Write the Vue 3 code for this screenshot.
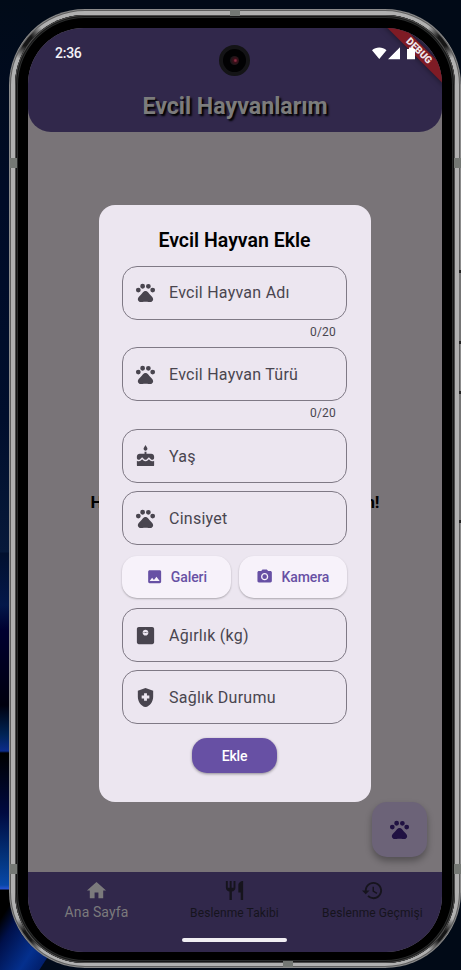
<script setup>
const pets = [
  'M2 9.5a2.5 2.5 0 1 0 5 0a2.5 2.5 0 1 0-5 0zM6.5 5.5a2.5 2.5 0 1 0 5 0a2.5 2.5 0 1 0-5 0zM12.5 5.5a2.5 2.5 0 1 0 5 0a2.5 2.5 0 1 0-5 0zM17 9.5a2.5 2.5 0 1 0 5 0a2.5 2.5 0 1 0-5 0z',
  'M17.34 14.86c-.87-1.02-1.6-1.89-2.48-2.91-.46-.54-1.05-1.08-1.75-1.32-.11-.04-.22-.07-.33-.09-.25-.04-.52-.04-.78-.04s-.53 0-.79.05c-.11.02-.22.05-.33.09-.7.24-1.28.78-1.75 1.32-.87 1.02-1.6 1.89-2.48 2.91-1.31 1.31-2.92 2.76-2.62 4.79.29 1.02 1.02 2.03 2.33 2.32.73.15 3.06-.44 5.54-.44h.18c2.48 0 4.81.58 5.54.44 1.31-.29 2.04-1.31 2.33-2.32.31-2.04-1.3-3.49-2.61-4.8z'
].join('')
const cake = 'M12 6c1.11 0 2-.9 2-2 0-.38-.1-.73-.29-1.03L12 0l-1.71 2.97c-.19.3-.29.65-.29 1.03 0 1.1.9 2 2 2zm4.6 9.99l-1.07-1.07-1.08 1.07c-1.3 1.3-3.58 1.31-4.89 0l-1.07-1.07-1.09 1.07C6.75 16.64 5.88 17 4.96 17c-.73 0-1.4-.23-1.96-.61V21c0 .55.45 1 1 1h16c.55 0 1-.45 1-1v-4.61c-.56.38-1.23.61-1.96.61-.92 0-1.79-.36-2.44-1.01zM18 9h-5V7h-2v2H6c-1.66 0-3 1.34-3 3v1.54c0 1.08.88 1.96 1.96 1.96.52 0 1.02-.2 1.38-.57l2.14-2.13 2.13 2.13c.74.74 2.03.74 2.77 0l2.14-2.13 2.13 2.13c.37.37.86.57 1.38.57 1.08 0 1.96-.88 1.96-1.96V12C21 10.34 19.66 9 18 9z'
const weight = 'M19 3H5c-1.1 0-2 .9-2 2v14c0 1.1.9 2 2 2h14c1.1 0 2-.9 2-2V5c0-1.1-.9-2-2-2zM12 12c-1.66 0-3-1.34-3-3s1.34-3 3-3 3 1.34 3 3-1.34 3-3 3zM10 8.5v1h1v-1zM11.5 8.5v1h1v-1zM13 8.5v1h1v-1z'
const health = 'M10.5 13H8v-3h2.5V7.5h3V10H16v3h-2.5v2.5h-3V13zM12 2L4 5v6.09c0 5.05 3.41 9.76 8 10.91 4.59-1.15 8-5.86 8-10.91V5l-8-3z'
const image = 'M21 19V5c0-1.1-.9-2-2-2H5c-1.1 0-2 .9-2 2v14c0 1.1.9 2 2 2h14c1.1 0 2-.9 2-2zM8.5 13.5l2.5 3.01L14.5 12l4.5 6H5l3.5-4.5z'
const camera = 'M8.8 12a3.2 3.2 0 1 0 6.4 0a3.2 3.2 0 1 0-6.4 0zM9 2L7.17 4H4c-1.1 0-2 .9-2 2v12c0 1.1.9 2 2 2h16c1.1 0 2-.9 2-2V6c0-1.1-.9-2-2-2h-3.17L15 2H9zm3 15c-2.76 0-5-2.24-5-5s2.24-5 5-5 5 2.24 5 5-2.24 5-5 5z'

const topFields = [
  { label: 'Evcil Hayvan Adı', icon: pets, counter: '0/20' },
  { label: 'Evcil Hayvan Türü', icon: pets, counter: '0/20' },
  { label: 'Yaş', icon: cake },
  { label: 'Cinsiyet', icon: pets }
]
const bottomFields = [
  { label: 'Ağırlık (kg)', icon: weight },
  { label: 'Sağlık Durumu', icon: health }
]
const photoButtons = [
  { label: 'Galeri', icon: image },
  { label: 'Kamera', icon: camera }
]
const tabs = [
  { label: 'Ana Sayfa', active: true, icon: 'M10 20v-6h4v6h5v-8h3L12 3 2 12h3v8z' },
  { label: 'Beslenme Takibi', icon: 'M11 9H9V2H7v7H5V2H3v7c0 2.12 1.66 3.84 3.75 3.97V22h2.5v-9.03C11.34 12.84 13 11.12 13 9V2h-2v7zm5-3v8h2.5v8H21V2c-2.76 0-5 2.24-5 4z' },
  { label: 'Beslenme Geçmişi', icon: 'M13 3c-4.97 0-9 4.03-9 9H1l3.89 3.89.07.14L9 12H6c0-3.87 3.13-7 7-7s7 3.13 7 7-3.13 7-7 7c-1.93 0-3.68-.79-4.94-2.06l-1.42 1.42C8.27 19.99 10.51 21 13 21c4.97 0 9-4.03 9-9s-4.03-9-9-9zm-1 5v5l4.28 2.54.72-1.21-3.5-2.08V8H12z' }
]
</script>

<template>
  <div class="desktop">
    <div class="phone">
      <i class="seam seam-top"></i><i class="seam seam-bottom"></i>
      <i class="seam side left upper"></i><i class="seam side right upper"></i>
      <i class="seam side left lower"></i><i class="seam side right lower"></i>
      <i class="key power"></i><i class="key volume"></i>
      <div class="bezel">
        <div class="screen">
          <header class="app-bar">
            <div class="status">
              <span>2:36</span>
              <svg class="signals" viewBox="0 0 44 14">
                <path d="M0 3.2C4-.5 10.500-.5 14.500 3.200L7.250 12z M16 12.300L28 .3V12.300z M35 2h2V.6h4V2h2v10.300h-8z" fill="#fff" />
              </svg>
            </div>
            <h1>Evcil Hayvanlarım</h1>
          </header>
          <main class="body">
            <p class="empty"><span>H</span><span>n!</span></p>
          </main>
          <nav class="tabs">
            <div v-for="t in tabs" :key="t.label" class="tab" :class="{ active: t.active }">
              <svg viewBox="0 0 24 24"><path :d="t.icon" /></svg>
              <span>{{ t.label }}</span>
            </div>
          </nav>
          <div class="fab"><svg viewBox="0 0 24 24"><path :d="pets" /></svg></div>
          <div class="home-bar"></div>
          <div class="lens"><i></i></div>
          <div class="debug">DEBUG</div>

          <section class="dialog">
            <h2>Evcil Hayvan Ekle</h2>
            <div class="form">
              <div v-for="f in topFields" :key="f.label" class="entry">
                <div class="field">
                  <svg viewBox="0 0 24 24"><path :d="f.icon" fill-rule="evenodd" /></svg>
                  <span>{{ f.label }}</span>
                </div>
                <small v-if="f.counter">{{ f.counter }}</small>
              </div>
              <div class="photos">
                <button v-for="b in photoButtons" :key="b.label" class="photo">
                  <svg viewBox="0 0 24 24"><path :d="b.icon" fill-rule="evenodd" /></svg>
                  <span>{{ b.label }}</span>
                </button>
              </div>
              <div v-for="f in bottomFields" :key="f.label" class="field">
                <svg viewBox="0 0 24 24"><path :d="f.icon" fill-rule="evenodd" /></svg>
                <span>{{ f.label }}</span>
              </div>
            </div>
            <button class="submit">Ekle</button>
          </section>
        </div>
      </div>
    </div>
  </div>
</template>

<style>
body { margin: 0; overflow: hidden; background: #010914; }
</style>

<style scoped>
* { box-sizing: border-box; }
.desktop {
  width: 461px;
  height: 970px;
  padding: 9px 0 0 9px;
  overflow: hidden;
  font-family: Roboto, "Liberation Sans", sans-serif;
  background:
    linear-gradient(123deg, #000 0 16px, #00104a 30px, #04308e 60px, #021f6c 76px, #010b1b 77px) 0 890px / 90px 80px no-repeat,
    linear-gradient(180deg, #000 0, #000a40 60px, #04347c 105px, #0848a8 132px, #2a52d0 136px, #000 137px) 0 753px / 30px 137px no-repeat,
    linear-gradient(180deg, #010b18 0, #000b27 200px, #000e2c 420px, #07193a 552px, #02102e 553px, #03184a 605px, #000030 630px, #00000d 705px, #002456 735px, #0c2c8c 751px, #000 753px) 0 0 / 30px 753px no-repeat,
    #010a17;
}
.phone {
  position: relative;
  width: 452px;
  height: 959px;
  padding: 6px 6px 5px;
  border-radius: 76px;
  background:
    radial-gradient(circle at 17px 31px, #161616 0 6px, transparent 20px),
    radial-gradient(circle at 435px 31px, #161616 0 6px, transparent 20px),
    radial-gradient(circle at 17px 928px, #161616 0 6px, transparent 20px),
    radial-gradient(circle at 435px 928px, #161616 0 6px, transparent 20px),
    #b0b0b0;
  box-shadow: inset 0 0 0 1px #8b8b8b, inset 0 0 0 2px #5f5f5f;
}
.bezel {
  height: 100%;
  padding: 13px 13px 11px;
  border-radius: 70px;
  background: #000;
  box-shadow: inset 0 0 0 1px #4c4c4c, inset 0 0 0 2px #161616, inset 0 0 0 3px #2b2d2d;
}
.screen {
  position: relative;
  display: flex;
  flex-direction: column;
  width: 414px;
  height: 924px;
  overflow: hidden;
  border-radius: 56px;
  background: #797478;
}
.seam { position: absolute; background: #747874; }
.seam-top { left: 221px; top: 1px; width: 10px; height: 6px; }
.seam-bottom { left: 274px; bottom: 1px; width: 10px; height: 6px; }
.side { width: 7px; height: 10px; }
.left { left: 1px; }
.right { right: 0; }
.upper { top: 149px; }
.lower { top: 855px; }
.key { position: absolute; right: 0; width: 2px; background: #747474; border: solid #222; border-width: 3px 0; }
.power { top: 261px; height: 74px; }
.volume { top: 382px; height: 132px; }
.app-bar {
  height: 104px;
  border-radius: 0 0 23px 23px;
  background: #31284b;
  text-align: center;
}
.status {
  display: flex;
  justify-content: space-between;
  align-items: center;
  height: 50px;
  padding: 0 26px 0 27px;
  color: #f4f2f7;
  font-size: 14px;
  font-weight: 500;
}
.status span { letter-spacing: -.25px; }
.signals { position: relative; z-index: 1; width: 44px; height: 14px; margin-top: 1px; }
h1 {
  margin: 13px 0 0;
  color: #7c7c7c;
  font-size: 23.200px;
  line-height: 30px;
  font-weight: 700;
  text-shadow: 2px 2px 2px #000;
}
.body { flex: 1; display: flex; align-items: center; justify-content: center; }
.empty {
  display: flex;
  justify-content: space-between;
  width: 289px;
  margin: 0;
  color: #000;
  font-size: 17.300px;
  font-weight: 700;
}
.tabs { display: flex; height: 80px; background: #31284b; }
.tab {
  flex: 1;
  display: flex;
  flex-direction: column;
  align-items: center;
  padding: 7px 1px 0 0;
  color: #16141d;
  font-size: 12px;
  line-height: 20px;
  letter-spacing: .1px;
  white-space: nowrap;
}
.tab svg { width: 23px; height: 23px; fill: currentColor; }
.tab span { margin-top: 1px; }
.tab.active { color: #7b7a7c; font-size: 14px; }
.tab.active span { margin-top: 0; }
.fab {
  position: absolute;
  right: 15px;
  bottom: 95px;
  display: grid;
  place-items: center;
  width: 55px;
  height: 55px;
  border-radius: 15px;
  background: #6c6378;
  box-shadow: 0 4px 7px rgba(0, 0, 0, .32);
}
.fab svg { width: 23px; height: 23px; fill: #201142; }
.home-bar {
  position: absolute;
  left: 154px;
  bottom: 10px;
  width: 105px;
  height: 4px;
  border-radius: 2px;
  background: #f0eef2;
}
.lens {
  position: absolute;
  left: 191px;
  top: 17px;
  display: grid;
  place-items: center;
  width: 31px;
  height: 31px;
  border-radius: 50%;
  border: 4px solid #141416;
  background: #020203;
}
.lens i { width: 9px; height: 9px; border-radius: 50%; background: radial-gradient(circle at 60% 50%, #8c2c44 0 .6px, #3c1019 2px, #191719 5px); }
.debug {
  position: absolute;
  right: -32px;
  top: 17px;
  width: 110px;
  height: 12px;
  transform: rotate(45deg);
  background: #7e1b25;
  box-shadow: 0 0 6px rgba(0, 0, 0, .5);
  color: #efe6ea;
  font-size: 10px;
  line-height: 12px;
  font-weight: 900;
  text-align: center;
}
.dialog {
  position: absolute;
  left: 70.500px;
  top: 176.700px;
  display: flex;
  flex-direction: column;
  align-items: center;
  width: 272px;
  height: 597px;
  padding: 22px 23.500px 0;
  border-radius: 16px;
  background: #ece6f0;
}
h2 { margin: 0 0 12px; color: #000; font-size: 19.500px; line-height: 27px; font-weight: 600; white-space: nowrap; }
.form { display: flex; flex-direction: column; gap: 8px; width: 225px; }
.entry { display: flex; flex-direction: column; }
.entry small {
  height: 20px;
  margin-bottom: -.3px;
  padding: 4px 11px 0 0;
  color: #49454f;
  font-size: 12px;
  line-height: 16px;
  letter-spacing: .2px;
  text-align: right;
}
.field {
  display: flex;
  align-items: center;
  gap: 12px;
  height: 54px;
  padding-left: 11px;
  border: 1px solid #7f7985;
  border-radius: 15px;
  color: #49454f;
  font-size: 16px;
  letter-spacing: .25px;
}
.field svg { width: 23px; height: 23px; fill: #49454f; }
.photos { display: flex; gap: 8px; padding: 2.500px 0; }
.photo {
  flex: 1;
  display: flex;
  align-items: center;
  justify-content: center;
  gap: 8px;
  height: 42px;
  padding: 0;
  border: 0;
  border-radius: 15px;
  background: #f7f2fa;
  box-shadow: 0 1px 2px rgba(0, 0, 0, .28);
  color: #6750a4;
  font: 500 14px Roboto, sans-serif;
  letter-spacing: -.1px;
}
.photo svg { width: 17.300px; height: 17.300px; fill: currentColor; }
.submit {
  width: 85px;
  height: 35px;
  margin-top: 14px;
  padding: 0;
  border: 0;
  border-radius: 15px;
  background: #6750a4;
  box-shadow: 0 1px 3px rgba(0, 0, 0, .4);
  color: #fff;
  font: 500 14px Roboto, sans-serif;
  letter-spacing: -.2px;
}
</style>
